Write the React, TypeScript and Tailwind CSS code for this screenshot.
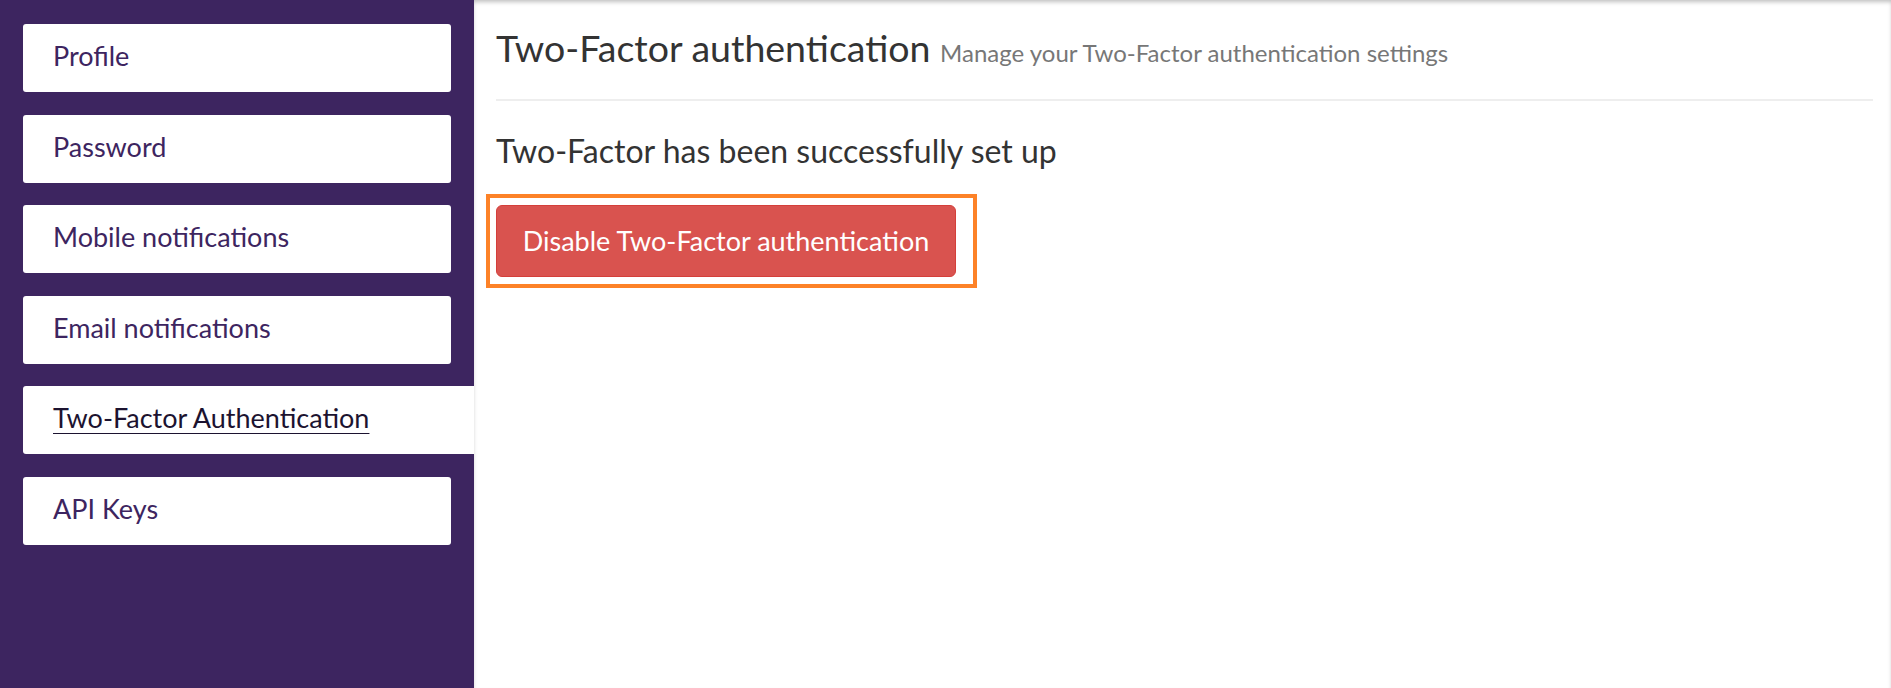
import React from 'react';

type NavItem = {
  label: string;
  active?: boolean;
};

const navItems: NavItem[] = [
  { label: 'Profile' },
  { label: 'Password' },
  { label: 'Mobile notifications' },
  { label: 'Email notifications' },
  { label: 'Two-Factor Authentication', active: true },
  { label: 'API Keys' },
];

export default function App() {
  return (
    <div className="flex min-h-[688px] w-full bg-white font-['Lato',sans-serif]">
      <aside className="flex w-[474px] shrink-0 flex-col gap-[22.5px] bg-[#3d2560] pt-6">
        {navItems.map((item) =>
          item.active ? (
            <div
              key={item.label}
              className="ml-[23px] flex h-[68px] items-center rounded-l-[3px] bg-white pb-[3px] pl-[30px] text-[27px] leading-[1.2] text-[#1c1330] underline decoration-1 underline-offset-[5px]"
            >
              {item.label}
            </div>
          ) : (
            <div
              key={item.label}
              className="mx-[23px] flex h-[68px] items-center rounded-[3px] bg-white pb-[3px] pl-[30px] text-[27px] leading-[1.2] text-[#3d2560]"
            >
              {item.label}
            </div>
          )
        )}
      </aside>

      <main className="flex-1 pl-[22px] pr-[18px] shadow-[inset_0_3px_4px_-1px_rgba(0,0,0,0.25)]">
        <div className="border-b-2 border-[#eeeeee] pt-[25px] pb-[29px]">
          <h1 className="text-[37.5px] leading-[1.2] text-[#333333]">
            Two-Factor authentication{' '}
            <small className="text-[24px] leading-[1.2] text-[#777777]">Manage your Two-Factor authentication settings</small>
          </h1>
        </div>

        <p className="mt-[31px] text-[32px] leading-[1.2] text-[#333333]">Two-Factor has been successfully set up</p>

        <div className="mt-[24px] -ml-[10px] inline-block border-4 border-[#fd8228] py-[7px] pl-[6px] pr-[17px]">
          <button className="flex h-[72px] w-[460px] items-center justify-center rounded-[6px] border border-[#d43f3a] bg-[#d9534f] text-[27px] text-white">
            Disable Two-Factor authentication
          </button>
        </div>
      </main>
    </div>
  );
}
